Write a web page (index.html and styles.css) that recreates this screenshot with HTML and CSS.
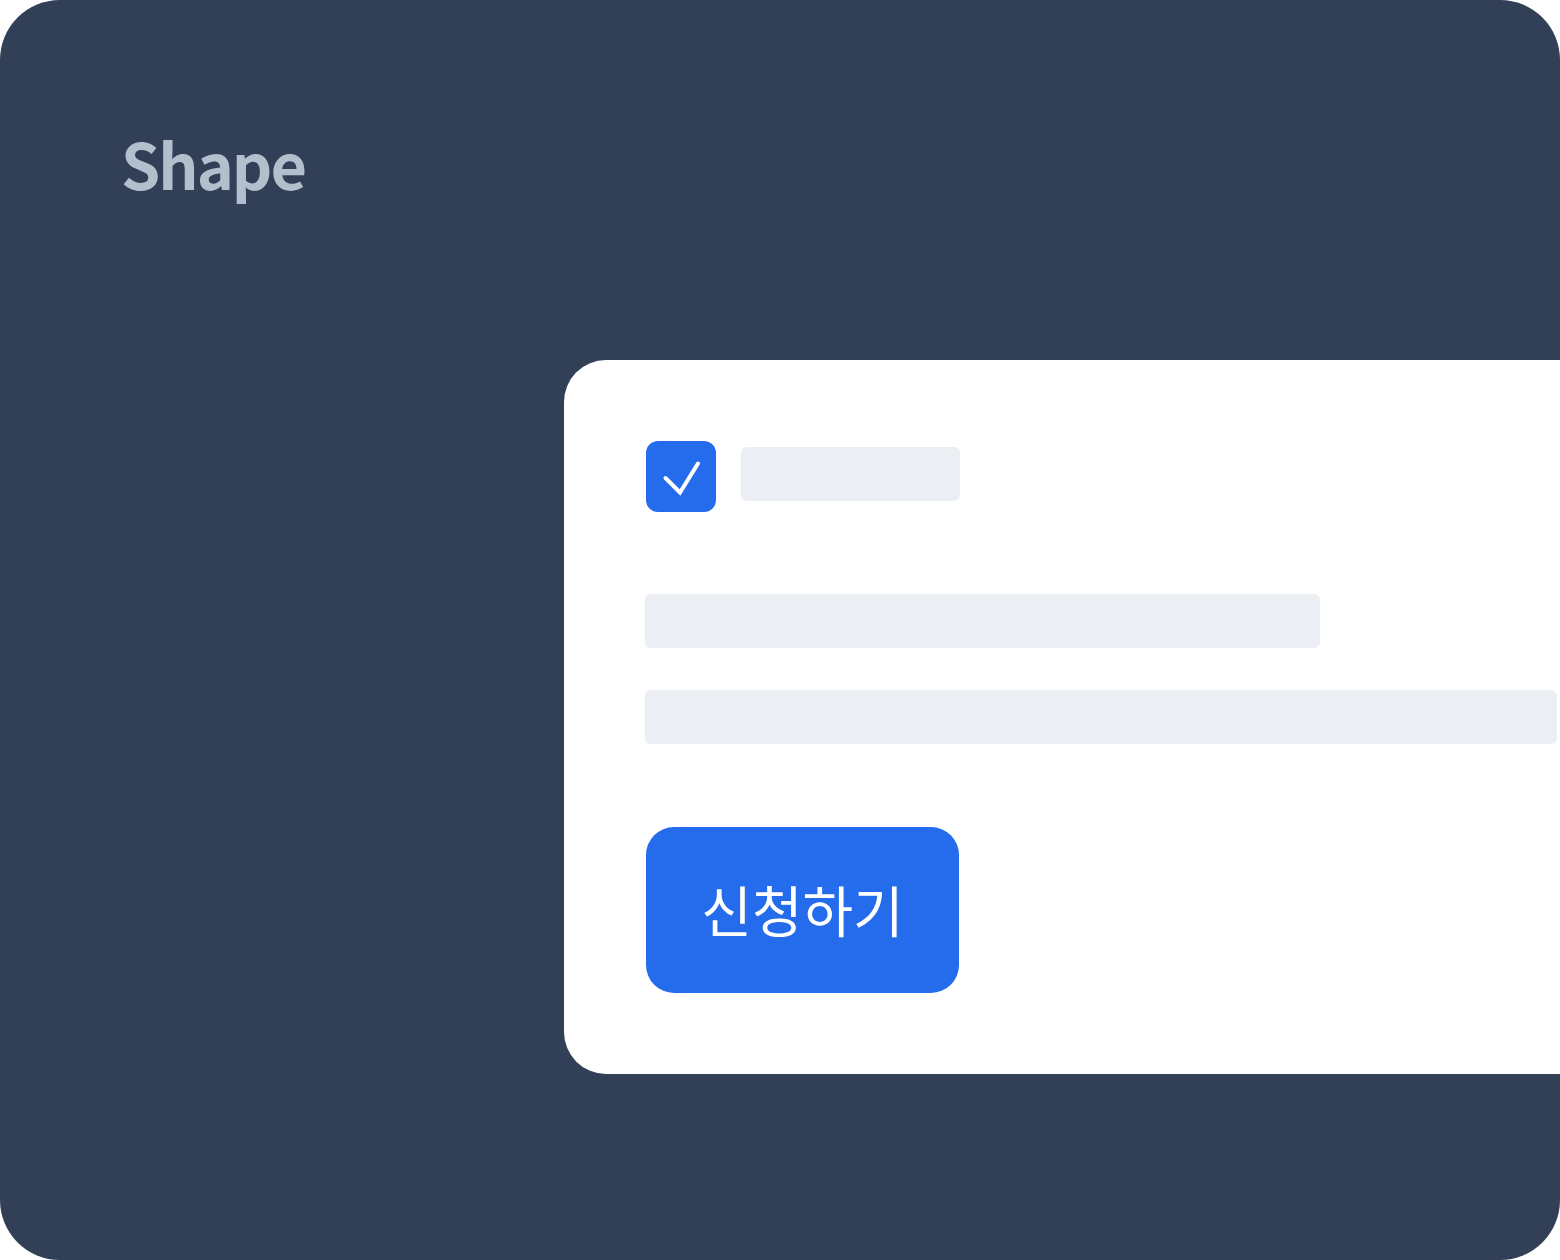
FILE: index.html
```html
<!DOCTYPE html>
<html lang="ko">
<head>
<meta charset="utf-8">
<link rel="stylesheet" href="styles.css">
</head>
<body>
<div class="panel">
  <h1 class="title">Shape</h1>
  <div class="card">
    <div class="check-row">
      <div class="checkbox">
        <svg width="70" height="70" viewBox="0 0 70 70"><path d="M19.5 36 L34 50.5 L52 21.5" fill="none" stroke="#fff" stroke-width="4" stroke-linecap="round" stroke-linejoin="miter"/></svg>
      </div>
      <div class="skel skel-short"></div>
    </div>
    <div class="skel skel-mid"></div>
    <div class="skel skel-long"></div>
    <button class="apply">신청하기</button>
  </div>
</div>
</body>
</html>
```
FILE: styles.css
```css
* { box-sizing: border-box; }
html, body { margin: 0; background: #ffffff; }
body { width: 1560px; height: 1260px; }
.panel {
  width: 1560px;
  height: 1260px;
  background: #313f57;
  border-radius: 60px;
  overflow: hidden;
  display: flex;
  flex-direction: column;
}
.title {
  margin: 119px 0 0 121px;
  font-family: "Noto Sans CJK KR", "Noto Sans", sans-serif;
  font-weight: 700;
  font-size: 63px;
  line-height: 88px;
  height: 88px;
  color: #b3bfcc;
  letter-spacing: -2px;
}
.card {
  margin: 153px 0 0 564px;
  width: 1100px;
  height: 714px;
  background: #ffffff;
  border-radius: 42px 0 0 42px;
  padding: 81px 0 0 82px;
  display: flex;
  flex-direction: column;
  align-items: flex-start;
}
.check-row {
  display: flex;
  align-items: flex-start;
  gap: 25px;
  height: 71px;
}
.checkbox {
  width: 70px;
  height: 71px;
  border-radius: 12px;
  background: #256ced;
  display: flex;
  align-items: center;
  justify-content: center;
}
.checkbox svg { display: block; }
.skel {
  background: #ebeef2;
  border-radius: 6px;
  height: 54px;
}
.skel-short { width: 219px; margin-top: 6px; }
.skel-mid { width: 675px; margin-top: 82px; margin-left: -1px; }
.skel-long { width: 912px; margin-top: 42px; margin-left: -1px; }
.apply {
  margin-top: 83px;
  width: 313px;
  height: 166px;
  border: 0;
  border-radius: 28px;
  background: #256ced;
  color: #ffffff;
  font-family: "Noto Sans CJK KR", "Noto Sans", sans-serif;
  font-weight: 400;
  font-size: 55px;
  letter-spacing: 0;
  padding: 0 0 4px 0;
}
```
